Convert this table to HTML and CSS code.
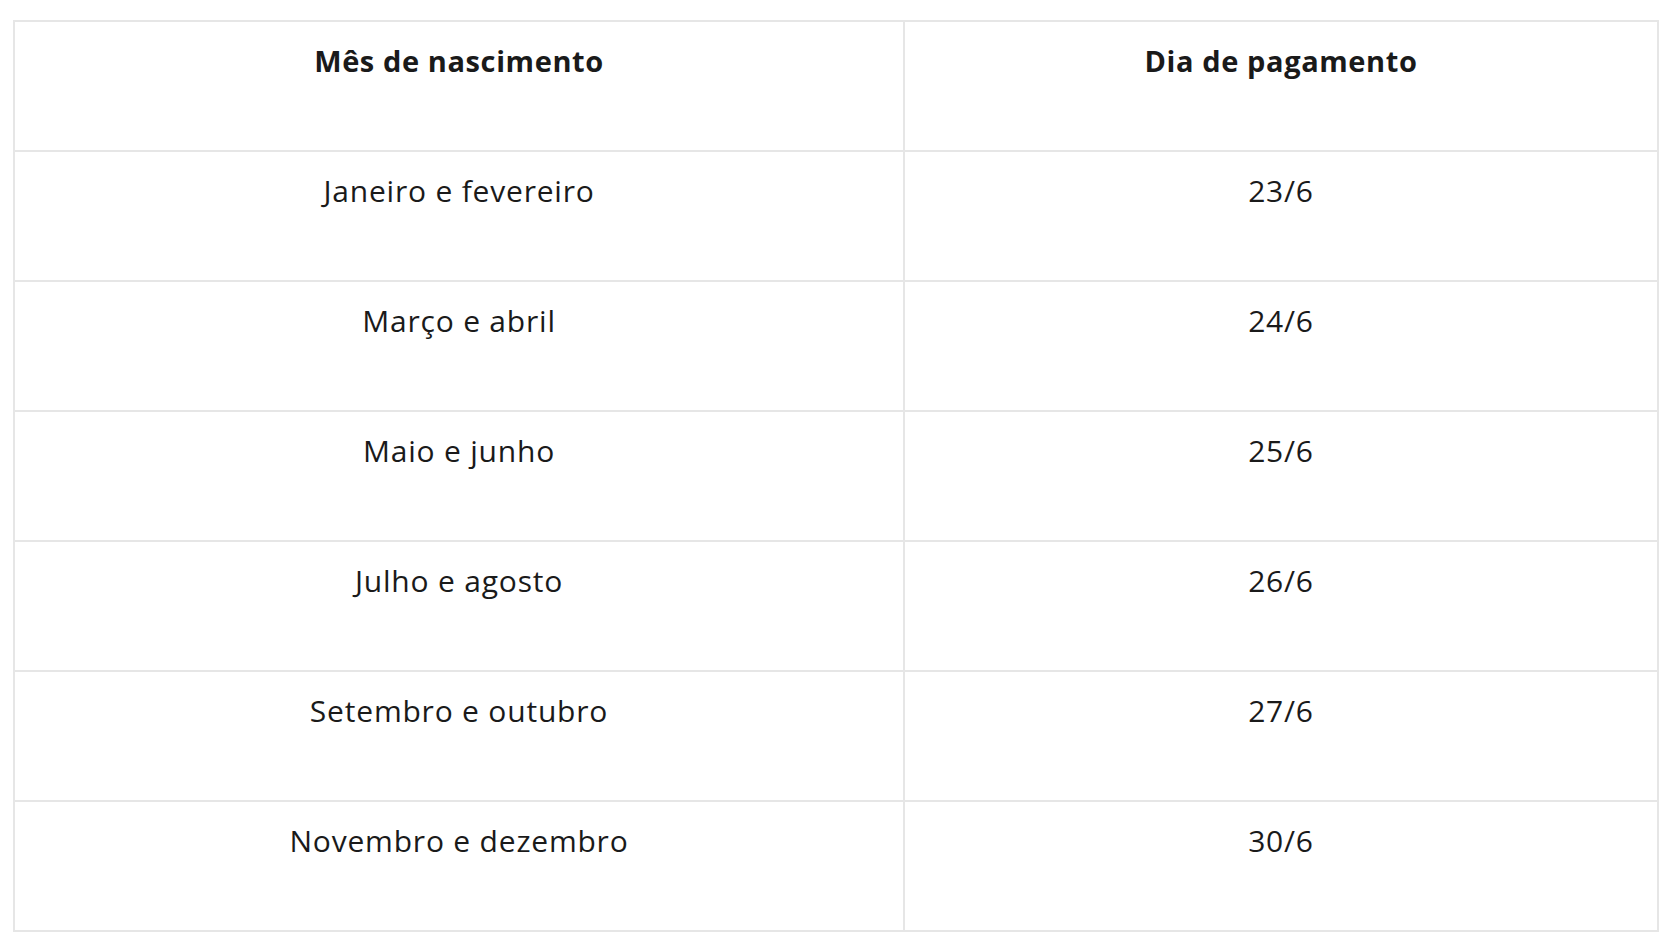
FILE: index.html
```html
<!DOCTYPE html>
<html lang="pt-BR">
<head>
<meta charset="utf-8">
<link rel="stylesheet" href="styles.css">
</head>
<body>
<table class="pay-table">
  <thead>
    <tr>
      <th class="col-month">Mês de nascimento</th>
      <th class="col-day">Dia de pagamento</th>
    </tr>
  </thead>
  <tbody>
    <tr><td>Janeiro e fevereiro</td><td>23/6</td></tr>
    <tr><td>Março e abril</td><td>24/6</td></tr>
    <tr><td>Maio e junho</td><td>25/6</td></tr>
    <tr><td>Julho e agosto</td><td>26/6</td></tr>
    <tr><td>Setembro e outubro</td><td>27/6</td></tr>
    <tr><td>Novembro e dezembro</td><td>30/6</td></tr>
  </tbody>
</table>
</body>
</html>
```

FILE: styles.css
```css
html, body {
  margin: 0;
  padding: 0;
  background: #ffffff;
}

body {
  padding: 20px 11px 0 13px;
  font-family: "Open Sans", "Liberation Sans", sans-serif;
  color: #1a1a1a;
}

.pay-table {
  width: 1646px;
  border-collapse: collapse;
  border: 2px solid #e6e6e6;
  table-layout: fixed;
}

.col-month {
  width: 890px;
}

.pay-table th,
.pay-table td {
  border: 2px solid #e6e6e6;
  height: 130px;
  box-sizing: border-box;
  padding: 20px 10px 0;
  vertical-align: top;
  text-align: center;
  line-height: 38px;
}

.pay-table th {
  font-size: 29px;
  font-weight: 700;
  letter-spacing: 0.6px;
}

.pay-table td {
  font-size: 30px;
  font-weight: 400;
  letter-spacing: 0.8px;
}
```
